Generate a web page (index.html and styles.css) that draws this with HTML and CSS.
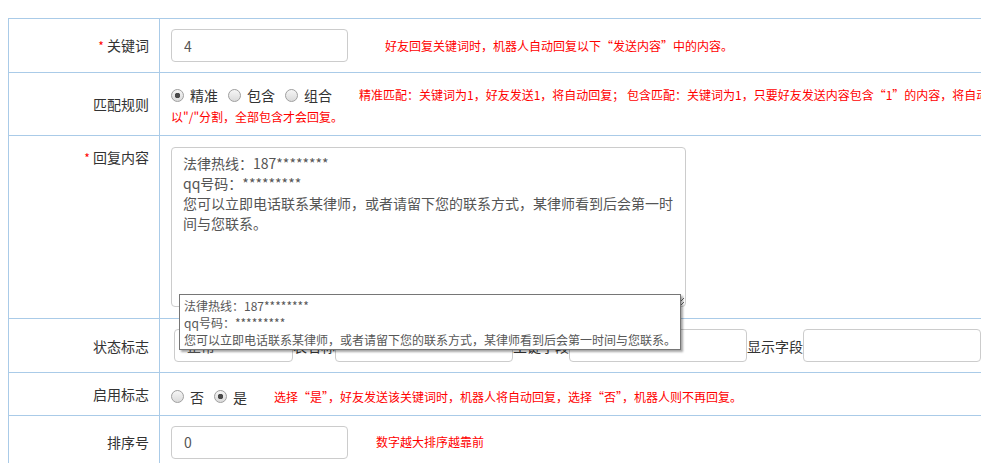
FILE: index.html
```html
<!DOCTYPE html>
<html lang="zh-CN">
<head>
    <meta charset="UTF-8">
    <title>关键词回复</title>
    <link rel="stylesheet" href="styles.css">
</head>
<body>
  <div class="page">
    <table class="form-table">
      <colgroup>
        <col class="col-label">
        <col>
      </colgroup>
      <tr>
        <td class="label"><span class="req">*</span> 关键词</td>
        <td>
          <input class="text-input" type="text" value="4"><span class="hint hint-first">好友回复关键词时，机器人自动回复以下“发送内容”中的内容。</span>
        </td>
      </tr>
      <tr>
        <td class="label">匹配规则</td>
        <td class="cell-rules">
          <label class="radio"><input type="radio" name="match" checked>精准</label><label class="radio"><input type="radio" name="match">包含</label><label class="radio"><input type="radio" name="match">组合</label><span class="hint">精准匹配：关键词为1，好友发送1，将自动回复； 包含匹配：关键词为1，只要好友发送内容包含“1”的内容，将自动回复； 组合匹配：关键词为多个，<br>以"/"分割，全部包含才会回复。</span>
        </td>
      </tr>
      <tr>
        <td class="label label-top"><span class="req">*</span> 回复内容</td>
        <td class="cell-reply">
          <div class="textarea-wrap">
            <textarea class="reply-text">法律热线：187********
qq号码：*********
您可以立即电话联系某律师，或者请留下您的联系方式，某律师看到后会第一时间与您联系。</textarea>
            <!-- native title tooltip -->
            <div class="tooltip">
              法律热线：187********<br>
              qq号码：*********<br>
              您可以立即电话联系某律师，或者请留下您的联系方式，某律师看到后会第一时间与您联系。
            </div>
          </div>
        </td>
      </tr>
      <tr>
        <td class="label">状态标志</td>
        <td>
          <div class="field-group">
            <input class="text-input input-short" type="text" value="正常"><span class="field-label">表名称</span><input class="text-input input-mid" type="text"><span class="field-label">主键字段</span><input class="text-input input-mid" type="text"><span class="field-label">显示字段</span><input class="text-input input-mid" type="text">
          </div>
        </td>
      </tr>
      <tr>
        <td class="label">启用标志</td>
        <td class="cell-enable">
          <label class="radio"><input type="radio" name="enable">否</label><label class="radio"><input type="radio" name="enable" checked>是</label><span class="hint">选择“是”，好友发送该关键词时，机器人将自动回复，选择“否”，机器人则不再回复。</span>
        </td>
      </tr>
      <tr>
        <td class="label">排序号</td>
        <td>
          <input class="text-input" type="text" value="0"><span class="hint">数字越大排序越靠前</span>
        </td>
      </tr>
    </table>
  </div>
</body>
</html>
```

FILE: styles.css
```css
* {
    box-sizing: border-box;
}

html,
body {
    overflow: hidden;
}

body {
    margin: 8px;
    font-family: "Microsoft YaHei", "Noto Sans CJK SC", sans-serif;
    font-size: 14px;
    color: #333;
    background: #fff;
}

.page {
    padding-top: 10px;
}

.form-table {
    border-collapse: collapse;
    table-layout: fixed;
    width: 1300px;
}

.col-label {
    width: 151px;
}

.form-table td {
    border: 1px solid #aacbe8;
    padding: 10px 11px;
    line-height: 20px;
    vertical-align: middle;
}

.form-table td.label {
    text-align: right;
    padding-right: 10px;
    white-space: nowrap;
}

.form-table td.label-top {
    vertical-align: top;
    padding-top: 11px;
}

.req {
    color: #f00;
    font-size: 12px;
}

.text-input {
    display: inline-block;
    vertical-align: middle;
    width: 177px;
    height: 33px;
    padding: 0 12px;
    border: 1px solid #ccc;
    border-radius: 4px;
    font-family: inherit;
    font-size: 14px;
    color: #555;
    background: #fff;
    outline: none;
}

.hint {
    color: #f00;
    font-size: 12px;
    margin-left: 28px;
    vertical-align: middle;
}

.hint-first {
    margin-left: 37px;
}

.form-table td.cell-rules {
    padding-top: 10px;
    padding-bottom: 8px;
}

.form-table td.cell-reply {
    padding-top: 11px;
    padding-bottom: 11px;
}

.form-table td.cell-enable {
    padding-top: 11px;
    padding-bottom: 8px;
}

.radio {
    display: inline-flex;
    align-items: center;
    margin-right: 10px;
    vertical-align: middle;
}

.radio input {
    -webkit-appearance: none;
    appearance: none;
    width: 13px;
    height: 13px;
    margin: 0 6px 0 0;
    border: 1px solid #a0a0a0;
    border-radius: 50%;
    background: linear-gradient(#f6f6f6, #dadada);
}

.radio input:checked {
    background: radial-gradient(circle, #4a4a4a 0 2.5px, transparent 3px),
                linear-gradient(#f6f6f6, #dadada);
}

.cell-rules .hint,
.cell-enable .hint {
    margin-left: 17px;
}

.textarea-wrap {
    position: relative;
    width: 515px;
}

.reply-text {
    display: block;
    width: 515px;
    height: 160px;
    padding: 5px 8px 5px 11px;
    border: 1px solid #ccc;
    border-radius: 4px;
    font-family: inherit;
    font-size: 14px;
    line-height: 20px;
    color: #555;
    outline: none;
}

.tooltip {
    position: absolute;
    left: 8px;
    top: 147px;
    padding: 2px 4px 1px;
    border: 1px solid #767676;
    background: #fff;
    box-shadow: 2px 2px 2px rgba(0, 0, 0, 0.35);
    font-size: 12px;
    line-height: 17px;
    color: #575757;
    white-space: nowrap;
    z-index: 10;
}

.field-group {
    display: flex;
    align-items: center;
    margin-left: 3px;
}

.field-label {
    white-space: nowrap;
}

.input-short {
    width: 119px;
}

.input-mid {
    width: 178px;
}
```
